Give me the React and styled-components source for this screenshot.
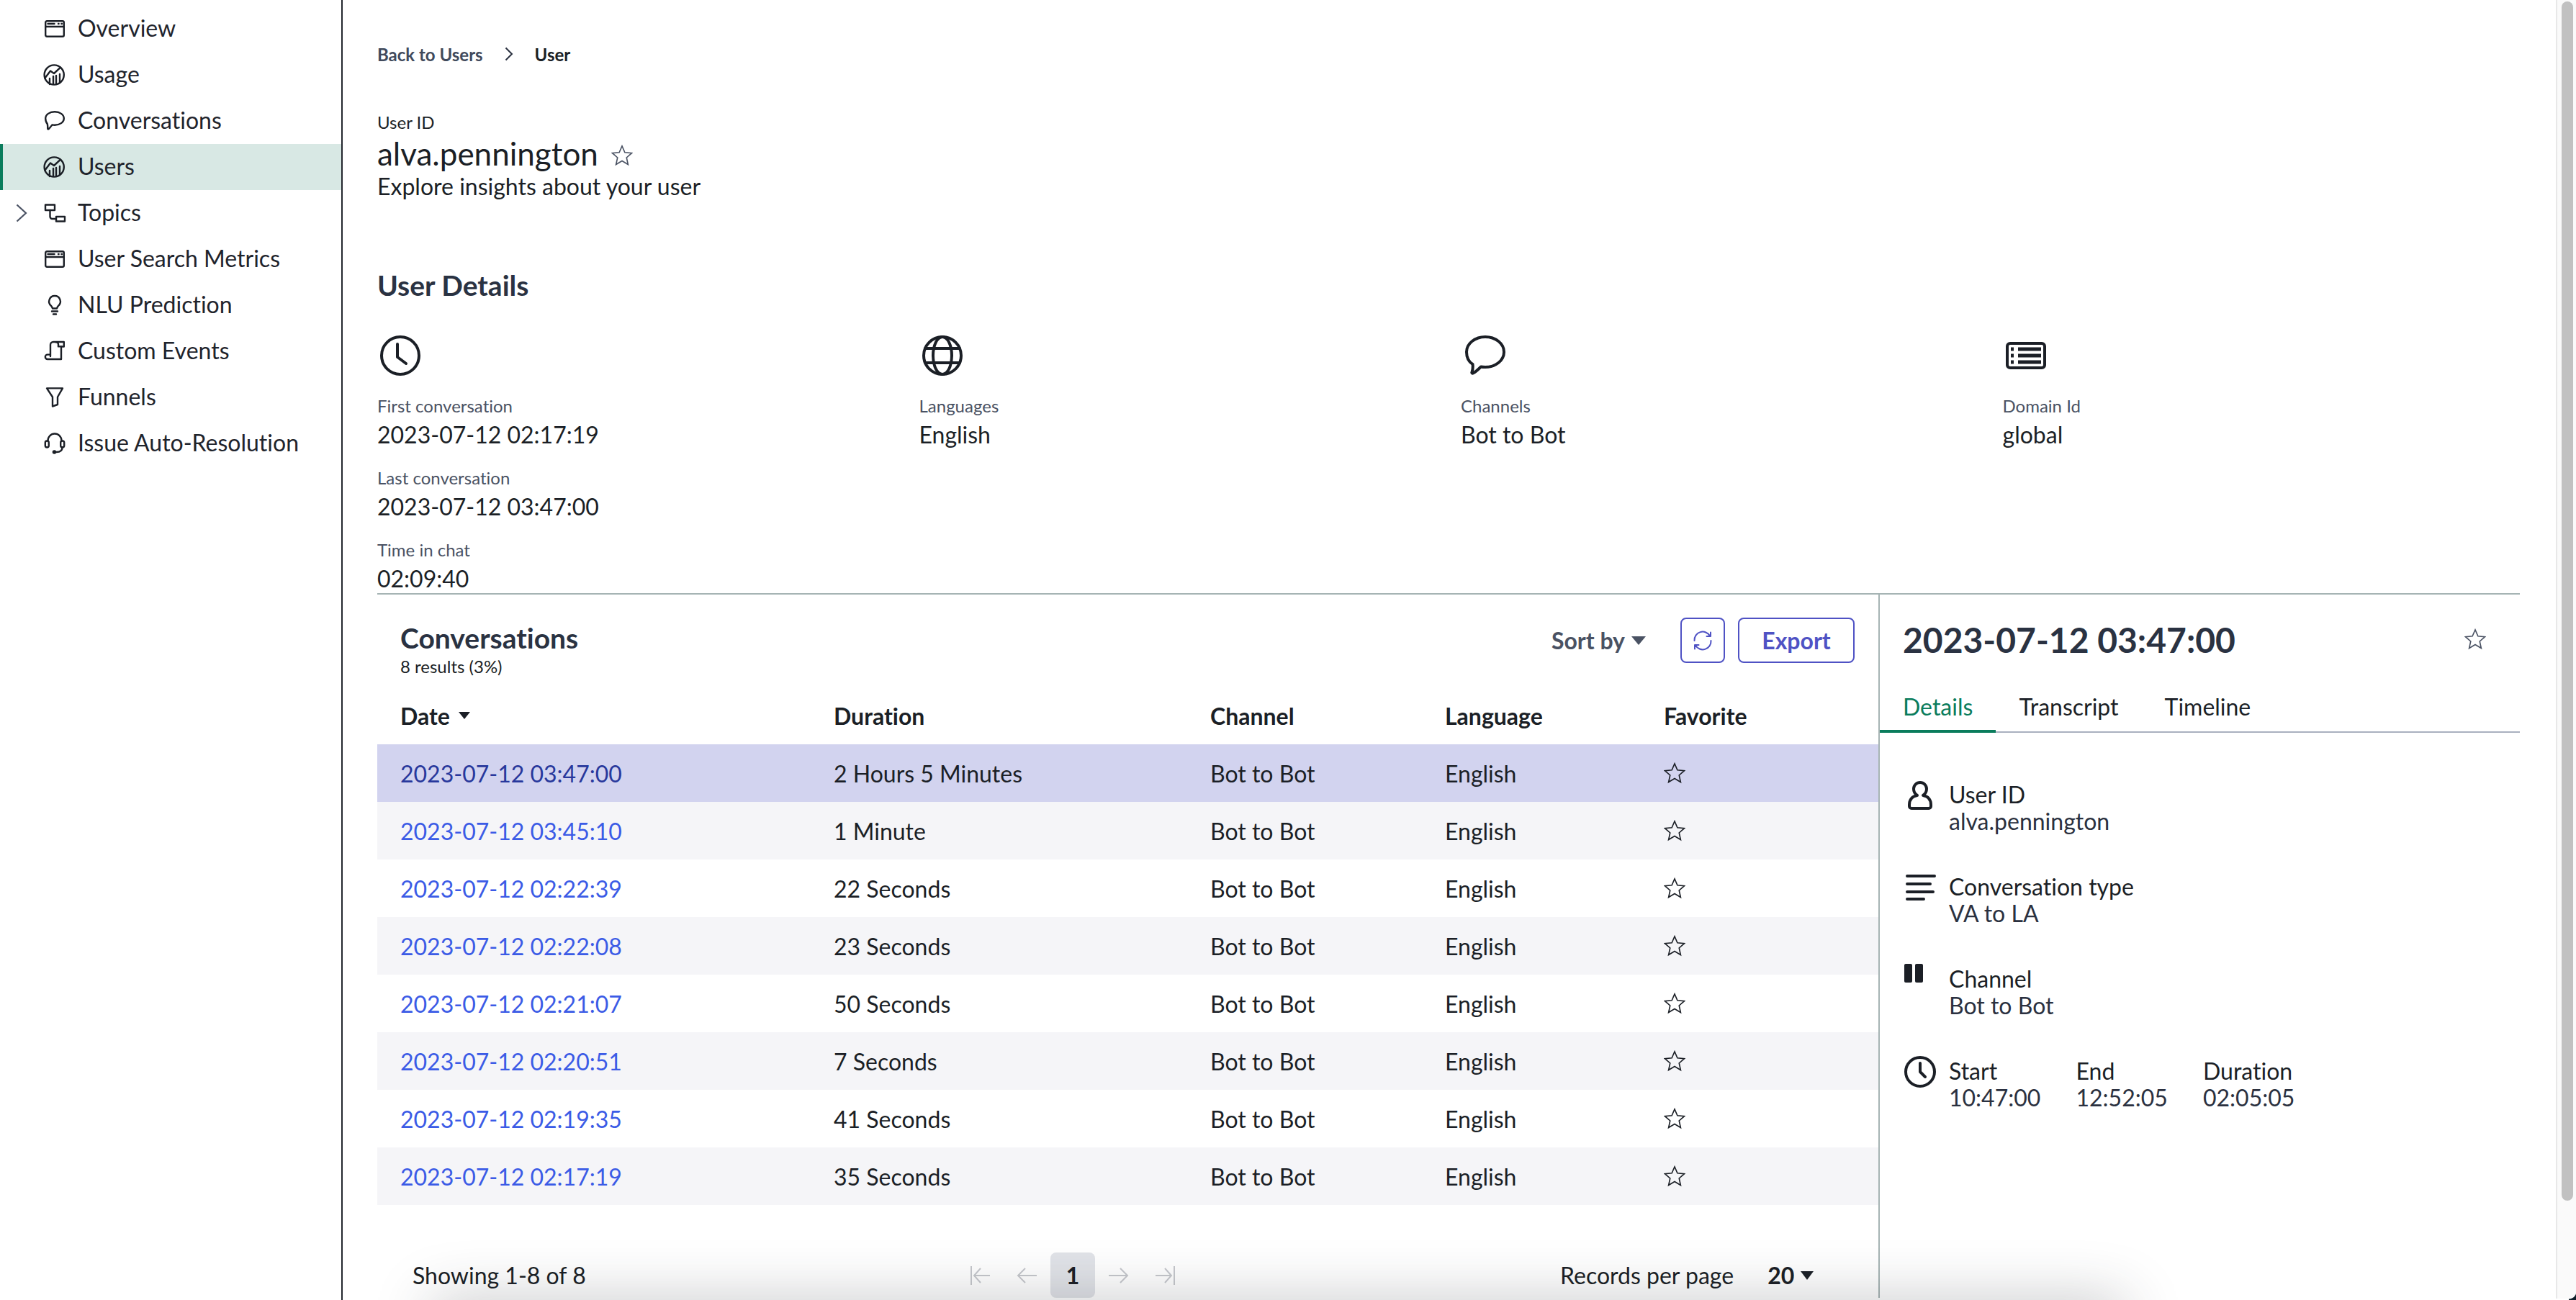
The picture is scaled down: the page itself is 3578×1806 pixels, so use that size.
import React from "react";
import styled, { createGlobalStyle } from "styled-components";

const GlobalStyle = createGlobalStyle`
  html, body {
    margin: 0;
    padding: 0;
    background: #fff;
  }
  * {
    box-sizing: border-box;
  }
  body {
    font-family: Lato, "Open Sans", sans-serif;
    font-variant-ligatures: none;
    color: #1b1f26;
  }
`;

const Page = styled.div`
  position: relative;
  width: 3578px;
  height: 1806px;
  display: flex;
  overflow: hidden;
  background: #fff;
`;

const Sidebar = styled.nav`
  width: 476px;
  flex-shrink: 0;
  padding-top: 8px;
  border-right: 2px solid #23272e;
`;

const NavRow = styled.div`
  height: 64px;
  display: flex;
  align-items: center;
  padding-left: 18px;
  font-size: 32px;
  color: #1f242c;
  border-left: 4px solid ${(p) => (p.$active ? "#0a7c5c" : "transparent")};
  background: ${(p) => (p.$active ? "#d8e8e4" : "transparent")};
`;

const NavLabel = styled.span`
  margin-top: -3px;
`;

const ChevronSlot = styled.span`
  width: 38px;
  display: flex;
  align-items: center;
`;

const NavIcon = styled.svg`
  width: 32px;
  height: 32px;
  margin-right: 16px;
  fill: none;
  stroke: #1b1f26;
  stroke-width: 2.4;
  stroke-linejoin: round;
  stroke-linecap: round;
`;

const Main = styled.main`
  flex: 1;
  min-width: 0;
  display: flex;
  flex-direction: column;
  padding: 55px 50px 3px 48px;
`;

const Breadcrumb = styled.div`
  display: flex;
  align-items: center;
  height: 40px;
  font-size: 24px;
  font-weight: 700;
`;

const CrumbLink = styled.span`
  color: #414a5c;
`;

const CrumbCurrent = styled.span`
  color: #1b1f26;
`;

const CrumbChevron = styled.svg`
  width: 12px;
  height: 20px;
  margin: 0 30px 0 30px;
  fill: none;
  stroke: #2a3140;
  stroke-width: 2;
`;

const Eyebrow = styled.div`
  margin-top: 59px;
  font-size: 24px;
  line-height: 32px;
`;

const TitleRow = styled.div`
  display: flex;
  align-items: center;
  height: 55px;
`;

const UserName = styled.h1`
  margin: 0 18px 0 0;
  font-size: 44px;
  font-weight: 400;
  line-height: 55px;
`;

const TitleStar = styled.span`
  margin-top: 5px;
`;

const Subtitle = styled.div`
  font-size: 32px;
  line-height: 36px;
`;

const SectionTitle = styled.h2`
  margin: 0;
  font-size: 39px;
  font-weight: 700;
  line-height: 48px;
  color: #2a3242;
`;

const UserDetailsTitle = styled(SectionTitle)`
  margin-top: 95px;
`;

const StatsGrid = styled.section`
  height: 362px;
  margin-top: 42px;
  display: grid;
  grid-template-columns: repeat(4, 752.5px);
`;

const StatIcon = styled.svg`
  display: block;
  width: 64px;
  height: 64px;
  margin-bottom: 22px;
  fill: none;
  stroke: #1b1f26;
  stroke-width: 4;
  stroke-linecap: round;
  stroke-linejoin: round;
`;

const StatLabel = styled.div`
  font-size: 24px;
  line-height: 32px;
  color: #4a5263;
`;

const StatValue = styled.div`
  font-size: 32px;
  line-height: 46px;
  padding-top: 1px;
  margin-bottom: 21px;
`;

const Split = styled.div`
  flex: 1;
  min-height: 0;
  display: flex;
  border-top: 2px solid #a6b4b4;
`;

const ListPanel = styled.section`
  width: 2087px;
  flex-shrink: 0;
  border-right: 2px solid #a6b4b4;
  display: flex;
  flex-direction: column;
`;

const ListHeader = styled.header`
  height: 128px;
  padding: 36px 33px 0 32px;
  display: flex;
  justify-content: space-between;
  align-items: flex-start;
`;

const ResultCount = styled.div`
  font-size: 24px;
  line-height: 32px;
`;

const Actions = styled.div`
  display: flex;
  align-items: center;
  margin-top: -4px;
`;

const SortBy = styled.div`
  display: flex;
  align-items: center;
  gap: 9px;
  margin-right: 48px;
  font-size: 32px;
  font-weight: 700;
  color: #4a5263;
`;

const Caret = styled.span`
  display: inline-block;
  border-style: solid;
  border-color: ${(p) => p.$color || "#1b1f26"} transparent transparent transparent;
  border-width: ${(p) => p.$h}px ${(p) => p.$w / 2}px 0 ${(p) => p.$w / 2}px;
`;

const OutlineButton = styled.button`
  height: 63px;
  width: ${(p) => p.$width}px;
  margin-left: ${(p) => p.$gap || 0}px;
  display: flex;
  align-items: center;
  justify-content: center;
  padding: 0;
  background: #fff;
  border: 2px solid #4f52c4;
  border-radius: 8px;
  color: #4f52c4;
  font-family: inherit;
  font-size: 32px;
  font-weight: 700;
`;

const RefreshIcon = styled.svg`
  width: 30px;
  height: 30px;
  fill: none;
  stroke: #4f52c4;
  stroke-width: 2;
  stroke-linecap: round;
  stroke-linejoin: round;
`;

const tableColumns = "602px 523px 326px 304px 1fr";

const HeadRow = styled.div`
  height: 80px;
  display: grid;
  grid-template-columns: ${tableColumns};
  align-items: center;
  font-size: 32px;
  font-weight: 700;
`;

const HeadCell = styled.div`
  display: flex;
  align-items: center;
  gap: 12px;
  padding-left: 32px;
`;

const Row = styled.div`
  height: 80px;
  display: grid;
  grid-template-columns: ${tableColumns};
  align-items: center;
  font-size: 32px;
  background: ${(p) => (p.$selected ? "#d2d3ef" : p.$shaded ? "#f5f5f8" : "#fff")};
`;

const Cell = styled.div`
  display: flex;
  align-items: center;
  padding-left: 32px;
`;

const DateLink = styled.a`
  color: ${(p) => (p.$selected ? "#28389c" : "#3b5be6")};
  text-decoration: none;
`;

const StarIcon = styled.svg`
  display: block;
  width: ${(p) => p.$size}px;
  height: ${(p) => p.$size}px;
  fill: none;
  stroke: ${(p) => p.$color || "#1b1f26"};
  stroke-width: 1.3;
  stroke-linejoin: miter;
`;

const Footer = styled.footer`
  flex: 1;
  display: grid;
  grid-template-columns: 758px 836px auto;
  align-items: end;
  padding: 0 0 0 49px;
  font-size: 32px;
`;

const FooterText = styled.div`
  height: 63px;
  line-height: 63px;
`;

const Pagination = styled.div`
  display: flex;
  gap: 2px;
`;

const PageIcon = styled.span`
  width: 62px;
  height: 63px;
  display: flex;
  align-items: center;
  justify-content: center;
  border-radius: 8px;
  font-weight: 700;
  background: ${(p) => (p.$current ? "#e1e3e8" : "transparent")};
`;

const PageArrow = styled.svg`
  width: 30px;
  height: 28px;
  fill: none;
  stroke: #c6c8cd;
  stroke-width: 2;
`;

const PerPage = styled.div`
  display: flex;
  align-items: center;
  height: 63px;
`;

const PerPageValue = styled.span`
  margin: 0 9px 0 47px;
  font-weight: 700;
`;

const DetailPanel = styled.section`
  flex: 1;
  min-width: 0;
  display: flex;
  flex-direction: column;
`;

const DetailHeader = styled.header`
  height: 92px;
  padding: 32px 47px 0 32px;
  display: flex;
  justify-content: space-between;
  align-items: center;
`;

const DetailTitle = styled.h2`
  margin: 0;
  font-size: 48px;
  font-weight: 700;
  color: #2a3242;
`;

const Tabs = styled.div`
  height: 100px;
  display: flex;
  align-items: flex-end;
  border-bottom: 2px solid #a9b0bf;
`;

const Tab = styled.div`
  height: 68px;
  padding: 0 32px;
  font-size: 32px;
  line-height: 64px;
  margin-bottom: -2px;
  color: ${(p) => (p.$active ? "#0a7c5c" : "#1b1f26")};
  border-bottom: 4px solid ${(p) => (p.$active ? "#0a7c5c" : "transparent")};
`;

const InfoList = styled.div`
  margin-top: 67px;
  padding-left: 32px;
  display: flex;
  flex-direction: column;
  gap: 54px;
`;

const InfoBlock = styled.div`
  display: flex;
  height: 74px;
`;

const InfoIcon = styled.svg`
  width: 64px;
  height: 64px;
  flex-shrink: 0;
  overflow: visible;
  fill: none;
  stroke: #1b1f26;
  stroke-width: 4;
  stroke-linecap: round;
  stroke-linejoin: round;
`;

const InfoText = styled.div`
  font-size: 32px;
  line-height: 37px;
  width: ${(p) => (p.$cell ? "176.5px" : "auto")};
`;

const InfoValue = styled.div`
  color: #2b3140;
`;

const BottomShadow = styled.div`
  position: absolute;
  left: 600px;
  width: 2350px;
  bottom: -60px;
  height: 60px;
  box-shadow: 0 0 80px rgba(40, 44, 50, 0.28);
  pointer-events: none;
`;

const ScrollTrack = styled.div`
  width: 28px;
  flex-shrink: 0;
  margin-bottom: 2px;
  padding: 2px 4px 0 6px;
  background: #fafafa;
  border-left: 2px solid #e8e8e8;
`;

const ScrollThumb = styled.div`
  height: 1666px;
  border-radius: 8px;
  background: #c1c1c1;
`;

const WindowCorner = styled.div`
  position: absolute;
  right: 0;
  bottom: 0;
  width: 10px;
  height: 12px;
  background: radial-gradient(circle at 0 0, transparent 10px, #0e1f2b 11px);
`;

const WindowIcon = () => (
  <NavIcon viewBox="0 0 32 32">
    <rect x="3.2" y="5.2" width="25.6" height="21.6" rx="2" />
    <path d="M3.2 13h25.6M6.5 9h9M21 9h.6M25.4 9h.6" />
  </NavIcon>
);

const ChartIcon = () => (
  <NavIcon viewBox="0 0 32 32">
    <circle cx="15.2" cy="16" r="13.6" />
    <path d="M2.4 20.6 10 10.6l5 3.4 9-8.4" />
    <path d="M9 21v8M14 18v10.6M18 17v11M23 15v11" />
  </NavIcon>
);

const BubbleIcon = () => (
  <NavIcon viewBox="0 0 32 32">
    <path d="M16 3.2c7 0 12.8 4 12.8 9.3s-5.8 9.3-12.8 9.3c-1.2 0-2.4-.1-3.5-.4-1.5 2-3.3 4.3-4.8 5.8-.7.7-1.6.3-1.5-.6.1-2.2.1-4.4-.4-6.5C4.8 19 3.2 16 3.2 12.5 3.2 7.2 9 3.2 16 3.2z" />
  </NavIcon>
);

const TopicsIcon = () => (
  <NavIcon viewBox="0 0 32 32">
    <rect x="3" y="4.5" width="13" height="7.5" />
    <rect x="18" y="21" width="12" height="6.5" />
    <path d="M9.5 12v9a3 3 0 0 0 3 3H18" />
  </NavIcon>
);

const BulbIcon = () => (
  <NavIcon viewBox="0 0 32 32">
    <path d="M16 3a7.8 7.8 0 0 0-5 13.8c1 1 1.6 2 2 3.7h6c.4-1.7 1-2.7 2-3.7A7.8 7.8 0 0 0 16 3z" />
    <path d="M12 24.5h8M14 28.5h4" />
  </NavIcon>
);

const ScrollIcon = () => (
  <NavIcon viewBox="0 0 32 32">
    <path d="M10 21V7a4 4 0 0 1 4-4h14.8v6.5H25V27H6a3.2 3.2 0 0 1 0-6.4h4v2.500" />
    <path d="M18 3.4a3 3 0 0 1 3 3v3h4" />
  </NavIcon>
);

const FunnelIcon = () => (
  <NavIcon viewBox="0 0 32 32">
    <path d="M5 3.4h22L20 15.500V26l-7 2.500v-13z" />
  </NavIcon>
);

const HeadsetIcon = () => (
  <NavIcon viewBox="0 0 32 32">
    <path d="M6.500 12a9.500 9.500 0 0 1 19 0" />
    <rect x="2.800" y="12.500" width="5" height="9" rx="2.500" />
    <rect x="24.200" y="12.500" width="5" height="9" rx="2.500" />
    <path d="M26.500 21.500c0 4-3 6.500-8 6.500" />
    <circle cx="15.500" cy="28" r="1.600" fill="#1b1f26" />
  </NavIcon>
);

const Star = ({ size, color }) => (
  <StarIcon viewBox="0 0 24 24" $size={size} $color={color}>
    <polygon points="12 1.500 15.100 8.600 22.800 9.300 17 14.400 18.700 22 12 18 5.300 22 7 14.400 1.200 9.300 8.900 8.600" />
  </StarIcon>
);

const navItems = [
  { label: "Overview", icon: WindowIcon },
  { label: "Usage", icon: ChartIcon },
  { label: "Conversations", icon: BubbleIcon },
  { label: "Users", icon: ChartIcon, active: true },
  { label: "Topics", icon: TopicsIcon, chevron: true },
  { label: "User Search Metrics", icon: WindowIcon },
  { label: "NLU Prediction", icon: BulbIcon },
  { label: "Custom Events", icon: ScrollIcon },
  { label: "Funnels", icon: FunnelIcon },
  { label: "Issue Auto-Resolution", icon: HeadsetIcon },
];

const conversations = [
  ["2023-07-12 03:47:00", "2 Hours 5 Minutes"],
  ["2023-07-12 03:45:10", "1 Minute"],
  ["2023-07-12 02:22:39", "22 Seconds"],
  ["2023-07-12 02:22:08", "23 Seconds"],
  ["2023-07-12 02:21:07", "50 Seconds"],
  ["2023-07-12 02:20:51", "7 Seconds"],
  ["2023-07-12 02:19:35", "41 Seconds"],
  ["2023-07-12 02:17:19", "35 Seconds"],
];

const App = () => (
  <Page>
    <GlobalStyle />
    <Sidebar>
      {navItems.map(({ label, icon: Icon, active, chevron }) => (
        <NavRow key={label} $active={active}>
          <ChevronSlot>
            {chevron && (
              <svg width="16" height="26" viewBox="0 0 16 26" fill="none" stroke="#4a5263" strokeWidth="2.2">
                <path d="M1.5 1.5 14 13 1.5 24.5" />
              </svg>
            )}
          </ChevronSlot>
          <Icon />
          <NavLabel>{label}</NavLabel>
        </NavRow>
      ))}
    </Sidebar>

    <Main>
      <Breadcrumb>
        <CrumbLink>Back to Users</CrumbLink>
        <CrumbChevron viewBox="0 0 12 20">
          <path d="M1.5 1.5 10 10l-8.5 8.5" />
        </CrumbChevron>
        <CrumbCurrent>User</CrumbCurrent>
      </Breadcrumb>

      <Eyebrow>User ID</Eyebrow>
      <TitleRow>
        <UserName>alva.pennington</UserName>
        <TitleStar>
          <Star size={30} color="#4a5263" />
        </TitleStar>
      </TitleRow>
      <Subtitle>Explore insights about your user</Subtitle>

      <UserDetailsTitle>User Details</UserDetailsTitle>
      <StatsGrid>
        <div>
          <StatIcon viewBox="0 0 64 64">
            <circle cx="32" cy="32" r="26" />
            <path d="M28 16v18l12 9" />
          </StatIcon>
          <StatLabel>First conversation</StatLabel>
          <StatValue>2023-07-12 02:17:19</StatValue>
          <StatLabel>Last conversation</StatLabel>
          <StatValue>2023-07-12 03:47:00</StatValue>
          <StatLabel>Time in chat</StatLabel>
          <StatValue>02:09:40</StatValue>
        </div>
        <div>
          <StatIcon viewBox="0 0 64 64">
            <circle cx="32" cy="32" r="26" />
            <ellipse cx="32" cy="32" rx="13" ry="26" />
            <path d="M8 22h48M8 42h48" />
          </StatIcon>
          <StatLabel>Languages</StatLabel>
          <StatValue>English</StatValue>
        </div>
        <div>
          <StatIcon viewBox="0 0 64 64">
            <path d="M34 6c14 0 26 9 26 21s-12 21-26 21c-2 0-4 0-6-.5-3 3-7 7-11 9-1 .5-2-.5-1.500-1.500 1-3 1.500-7 1-11C10 40 8 34 8 27 8 15 20 6 34 6z" />
          </StatIcon>
          <StatLabel>Channels</StatLabel>
          <StatValue>Bot to Bot</StatValue>
        </div>
        <div>
          <StatIcon viewBox="0 0 64 64">
            <rect x="6" y="15" width="52" height="34" rx="4" />
            <path strokeWidth="5" strokeLinecap="butt" d="M11 23h4M21 23h32M11 32h4M21 32h32M11 41h4M21 41h32" />
          </StatIcon>
          <StatLabel>Domain Id</StatLabel>
          <StatValue>global</StatValue>
        </div>
      </StatsGrid>

      <Split>
        <ListPanel>
          <ListHeader>
            <div>
              <SectionTitle>Conversations</SectionTitle>
              <ResultCount>8 results (3%)</ResultCount>
            </div>
            <Actions>
              <SortBy>
                Sort by
                <Caret $w={20} $h={12} $color="#4a5263" />
              </SortBy>
              <OutlineButton $width={62} aria-label="Refresh">
                <RefreshIcon viewBox="0 0 30 30">
                  <path d="M3.500 15A11.500 11.500 0 0 1 25 8.500M26 3.500v5.500h-5.500" />
                  <path d="M26.500 15A11.500 11.500 0 0 1 5 21.500M4 26.500V21h5.500" />
                </RefreshIcon>
              </OutlineButton>
              <OutlineButton $width={162} $gap={18}>Export</OutlineButton>
            </Actions>
          </ListHeader>

          <HeadRow>
            <HeadCell>
              Date
              <Caret $w={16} $h={10} />
            </HeadCell>
            <HeadCell>Duration</HeadCell>
            <HeadCell>Channel</HeadCell>
            <HeadCell>Language</HeadCell>
            <HeadCell>Favorite</HeadCell>
          </HeadRow>

          {conversations.map(([date, duration], i) => (
            <Row key={date} $selected={i === 0} $shaded={i % 2 === 1}>
              <Cell>
                <DateLink $selected={i === 0}>{date}</DateLink>
              </Cell>
              <Cell>{duration}</Cell>
              <Cell>Bot to Bot</Cell>
              <Cell>English</Cell>
              <Cell>
                <Star size={30} />
              </Cell>
            </Row>
          ))}

          <Footer>
            <FooterText>Showing 1-8 of 8</FooterText>
            <Pagination>
              <PageIcon>
                <PageArrow viewBox="0 0 30 28">
                  <path d="M2 1v26M28 14H6M15 4 6 14l9 10" />
                </PageArrow>
              </PageIcon>
              <PageIcon>
                <PageArrow viewBox="0 0 30 28">
                  <path d="M29 14H3M13 4 3 14l10 10" />
                </PageArrow>
              </PageIcon>
              <PageIcon $current>1</PageIcon>
              <PageIcon>
                <PageArrow viewBox="0 0 30 28">
                  <path d="M1 14h26M17 4l10 10-10 10" />
                </PageArrow>
              </PageIcon>
              <PageIcon>
                <PageArrow viewBox="0 0 30 28">
                  <path d="M28 1v26M2 14h22M15 4l9 10-9 10" />
                </PageArrow>
              </PageIcon>
            </Pagination>
            <PerPage>
              Records per page
              <PerPageValue>20</PerPageValue>
              <Caret $w={18} $h={12} />
            </PerPage>
          </Footer>
        </ListPanel>

        <DetailPanel>
          <DetailHeader>
            <DetailTitle>2023-07-12 03:47:00</DetailTitle>
            <Star size={30} color="#4a5263" />
          </DetailHeader>
          <Tabs>
            <Tab $active>Details</Tab>
            <Tab>Transcript</Tab>
            <Tab>Timeline</Tab>
          </Tabs>
          <InfoList>
            <InfoBlock>
              <InfoIcon viewBox="0 0 64 64">
                <path d="M24 2a9 9 0 0 1 9 9c0 4-2 7-5 9 7 1 11 6 11 13v2a3 3 0 0 1-3 3H12a3 3 0 0 1-3-3v-2c0-7 4-12 11-13-3-2-5-5-5-9a9 9 0 0 1 9-9z" />
              </InfoIcon>
              <InfoText>
                User ID
                <InfoValue>alva.pennington</InfoValue>
              </InfoText>
            </InfoBlock>
            <InfoBlock>
              <InfoIcon viewBox="0 0 64 64">
                <path d="M6 4h38M6 15h32M6 26h36M6 36h23" />
              </InfoIcon>
              <InfoText>
                Conversation type
                <InfoValue>VA to LA</InfoValue>
              </InfoText>
            </InfoBlock>
            <InfoBlock>
              <InfoIcon viewBox="0 0 64 64">
                <rect x="2" y="-2" width="11" height="26" rx="2" fill="#1b1f26" stroke="none" />
                <rect x="17" y="-2" width="11" height="26" rx="2" fill="#1b1f26" stroke="none" />
              </InfoIcon>
              <InfoText>
                Channel
                <InfoValue>Bot to Bot</InfoValue>
              </InfoText>
            </InfoBlock>
            <InfoBlock>
              <InfoIcon viewBox="0 0 64 64">
                <circle cx="24" cy="20" r="20" />
                <path d="M24 8v12l7 7" />
              </InfoIcon>
              <InfoText $cell>
                Start
                <InfoValue>10:47:00</InfoValue>
              </InfoText>
              <InfoText $cell>
                End
                <InfoValue>12:52:05</InfoValue>
              </InfoText>
              <InfoText $cell>
                Duration
                <InfoValue>02:05:05</InfoValue>
              </InfoText>
            </InfoBlock>
          </InfoList>
        </DetailPanel>
      </Split>
    </Main>

    <ScrollTrack>
      <ScrollThumb />
    </ScrollTrack>
    <BottomShadow />
    <WindowCorner />
  </Page>
);

export default App;
